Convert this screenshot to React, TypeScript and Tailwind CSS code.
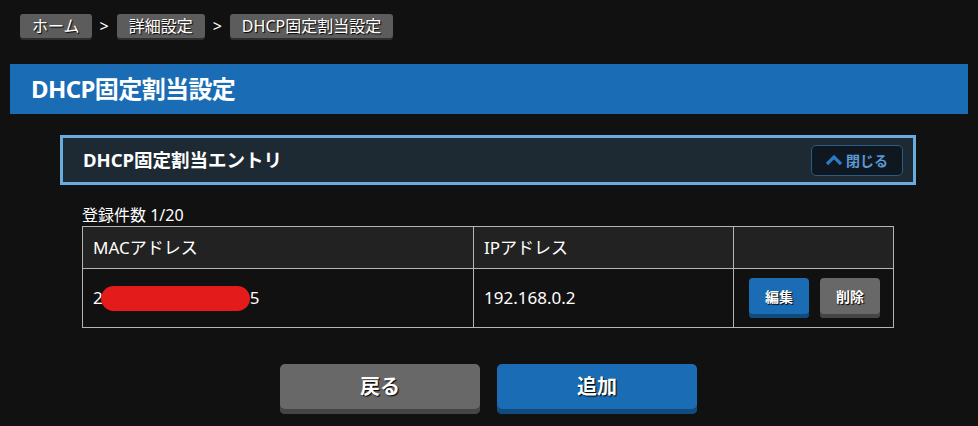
import React from "react"

const font = { fontFamily: '"Noto Sans", "Noto Sans CJK JP", sans-serif' }

function Crumb({ label }: { label: string }) {
  return (
    <span className="inline-flex h-[24px] items-center rounded-[3px] bg-[#5c5c5c] px-[12px] text-[16px] text-white shadow-[0_2px_0_#2e2e2e] [text-shadow:1px_1px_1px_#000]">
      {label}
    </span>
  )
}

export default function App() {
  return (
    <div className="min-h-[426px] w-[978px] bg-[#111111] pb-[10px] text-white" style={font}>
      {/* breadcrumb */}
      <div className="flex items-center gap-[8px] pl-[20px] pt-[14px]">
        <Crumb label="ホーム" />
        <span className="text-[16px]">&gt;</span>
        <Crumb label="詳細設定" />
        <span className="text-[16px]">&gt;</span>
        <Crumb label="DHCP固定割当設定" />
      </div>

      {/* page title */}
      <div className="mx-[10px] mt-[26px] flex h-[50px] items-center bg-[#1a6db4] pl-[21px]">
        <h1 className="text-[24px] font-bold tracking-tight">DHCP固定割当設定</h1>
      </div>

      {/* section header */}
      <div className="ml-[60px] mt-[21px] flex h-[50px] w-[856px] items-center justify-between border-[3px] border-[#69acdf] bg-[#1d2933] pl-[20px] pr-[10px]">
        <h2 className="text-[18.5px] font-bold">DHCP固定割当エントリ</h2>
        <button className="flex h-[31px] w-[92px] items-center justify-center gap-[4px] rounded-[5px] border border-[#2b5b84] bg-[#0f1820] text-[14px] font-bold text-[#5b9ad4]">
          <svg width="16" height="12" viewBox="0 0 16 12">
            <path d="M1 10 L8 3 L15 10" fill="none" stroke="#2a7cc4" strokeWidth="3.2" />
          </svg>
          閉じる
        </button>
      </div>

      {/* table */}
      <div className="ml-[82px] mt-[20px] w-[812px]">
        <div className="text-[16px] leading-[21px]">登録件数 1/20</div>
        <table className="w-full border-collapse text-[17px]">
          <thead>
            <tr className="h-[42px] bg-[#222222]">
              <th className="w-[391px] border border-[#b5b5b5] pl-[10px] text-left font-normal">MACアドレス</th>
              <th className="w-[260px] border border-[#b5b5b5] pl-[10px] text-left font-normal">IPアドレス</th>
              <th className="border border-[#b5b5b5]"></th>
            </tr>
          </thead>
          <tbody>
            <tr className="h-[59px]">
              <td className="border border-[#b5b5b5] pl-[10px]">
                <span className="inline-flex items-center">
                  2
                  <span className="-ml-[2px] inline-block h-[25px] w-[149px] rounded-full bg-[#e31b1b]"></span>
                  5
                </span>
              </td>
              <td className="border border-[#b5b5b5] pl-[10px]">192.168.0.2</td>
              <td className="border border-[#b5b5b5] pl-[15px]">
                <div className="flex gap-[11px]">
                  <button className="h-[40px] w-[60px] rounded-[4px] bg-[#1a6db4] pb-[3px] text-[14px] font-bold shadow-[inset_0_-4px_0_#114a7d] [text-shadow:1px_1px_1px_#000]">
                    編集
                  </button>
                  <button className="h-[40px] w-[60px] rounded-[4px] bg-[#686868] pb-[3px] text-[14px] font-bold shadow-[inset_0_-4px_0_#454545] [text-shadow:1px_1px_1px_#000]">
                    削除
                  </button>
                </div>
              </td>
            </tr>
          </tbody>
        </table>
      </div>

      {/* actions */}
      <div className="mt-[36px] flex gap-[17px] pl-[280px]">
        <button className="h-[50px] w-[200px] rounded-[5px] bg-[#686868] pb-[4px] text-[20px] font-bold shadow-[inset_0_-5px_0_#454545] [text-shadow:1px_1px_1px_#000]">
          戻る
        </button>
        <button className="h-[50px] w-[200px] rounded-[5px] bg-[#1a6db4] pb-[4px] text-[20px] font-bold shadow-[inset_0_-5px_0_#114a7d] [text-shadow:1px_1px_1px_#000]">
          追加
        </button>
      </div>
    </div>
  )
}
